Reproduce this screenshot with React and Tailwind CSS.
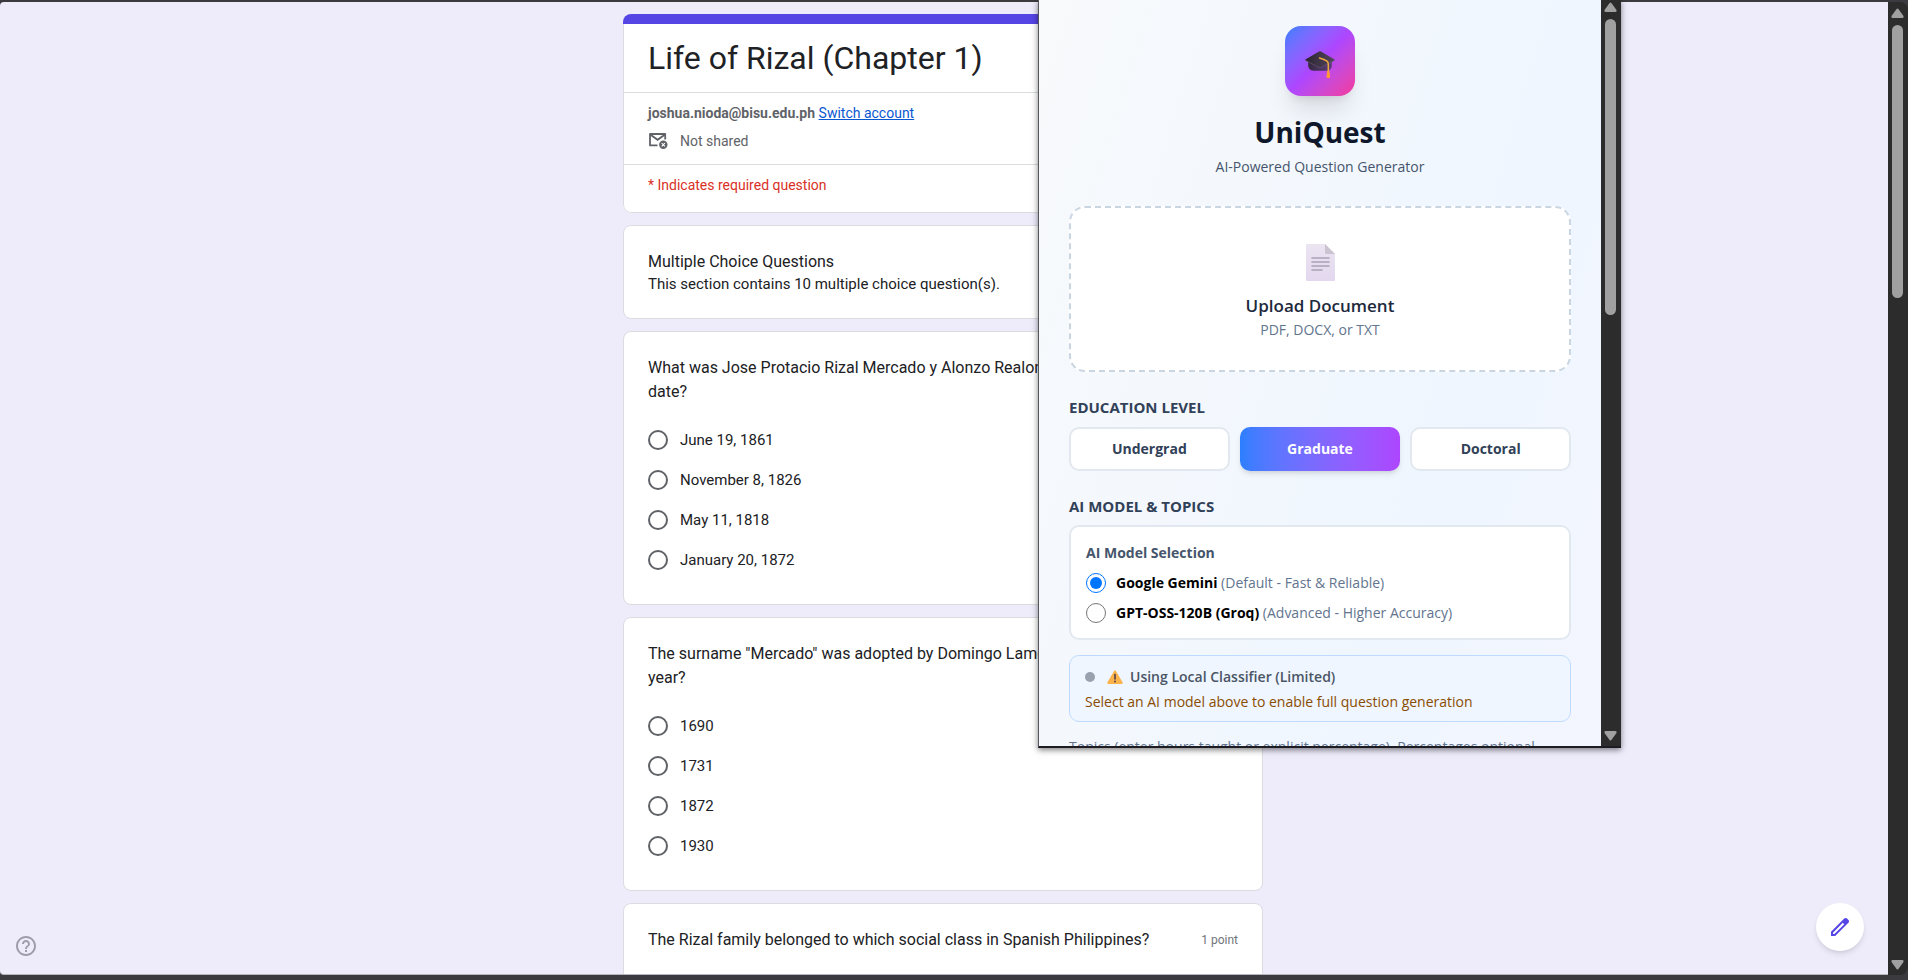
import { useState } from "react";

const QUESTIONS = [
  {
    id: "birth",
    text: "What was Jose Protacio Rizal Mercado y Alonzo Realonda's actual birth date?",
    options: ["June 19, 1861", "November 8, 1826", "May 11, 1818", "January 20, 1872"],
  },
  {
    id: "surname",
    text: 'The surname "Mercado" was adopted by Domingo Lameo during which year?',
    options: ["1690", "1731", "1872", "1930"],
  },
  {
    id: "class",
    text: "The Rizal family belonged to which social class in Spanish Philippines?",
    options: [],
  },
];

const LEVELS = ["Undergrad", "Graduate", "Doctoral"];

const MODELS = [
  { id: "gemini", name: "Google Gemini", note: "(Default - Fast & Reliable)" },
  { id: "groq", name: "GPT-OSS-120B (Groq)", note: "(Advanced - Higher Accuracy)" },
];

function Triangle({ down }) {
  return (
    <svg viewBox="0 0 13 10" className={down ? "h-[10px] w-[13px] rotate-180" : "h-[10px] w-[13px]"}>
      <path d="M5.6 1 Q6.5 0 7.4 1 L12.5 8 Q13 10 11.5 10 H1.5 Q0 10 .5 8 Z" fill="#a0a0a0" />
    </svg>
  );
}

function MailOffIcon() {
  return (
    <svg viewBox="0 0 20 18" className="h-[18px] w-5" fill="none">
      <path d="M17.2 7.5V2H2V13.4H9.5" stroke="#5f6368" strokeWidth="1.8" strokeLinejoin="round" />
      <path d="M2.2 2.6 9.6 7.8 17 2.6" stroke="#5f6368" strokeWidth="1.8" />
      <circle cx="15.3" cy="12.8" r="4.2" fill="#5f6368" />
      <path d="M13.7 11.2l3.2 3.2M16.9 11.2l-3.2 3.2" stroke="#fff" strokeWidth="1.1" />
    </svg>
  );
}

function CapIcon() {
  return (
    <svg viewBox="0 0 30 28" className="h-7 w-[30px]">
      <defs>
        <linearGradient id="capTop" x1="0" y1="0" x2="1" y2="0">
          <stop offset="0" stopColor="#2b2430" />
          <stop offset="1" stopColor="#54465f" />
        </linearGradient>
        <linearGradient id="capBase" x1="0" y1="0" x2="1" y2="0">
          <stop offset="0" stopColor="#35283f" />
          <stop offset="1" stopColor="#5b3e77" />
        </linearGradient>
      </defs>
      <path d="M3.2 9v6q.6 4.600 6 4.800h12q5-.2 5.600-4.800V9Z" fill="url(#capBase)" />
      <path d="M.4 8.400 14 .5q1-.5 2 0l13.600 7.900q.5.500-.2 1L16 16.400q-1 .5-2 0L.6 9.400q-.7-.5-.2-1Z" fill="url(#capTop)" />
      <path d="M.6 9.400 14 16.400q1 .5 2 0L29.400 9.400" fill="none" stroke="#6d5c7c" strokeWidth=".6" />
      <path d="M14.500 7q5 1.500 7.500 3.200 1.300 1 1.300 3v7" fill="none" stroke="#f0a93e" strokeWidth="1.500" strokeLinecap="round" />
      <path d="M22.200 20h2.200l.8 6q-1.900 2.400-3.800 0Z" fill="#ff9838" />
    </svg>
  );
}

function DocIcon() {
  return (
    <svg viewBox="0 0 29 37" className="h-[37px] w-[29px]">
      <defs>
        <linearGradient id="docFill" x1="0" y1="0" x2="0" y2="1">
          <stop offset="0" stopColor="#ebe4f1" />
          <stop offset="1" stopColor="#e3d8ef" />
        </linearGradient>
      </defs>
      <path d="M1 0H19L29 10V36q0 1-1 1H1q-1 0-1-1V1q0-1 1-1Z" fill="url(#docFill)" />
      <path d="M19 0 29 10H20q-1 0-1-1Z" fill="#cbc3d0" />
      <path d="M6 14h17M6 18h17M6 22h17M6 26h10" stroke="#aba1b5" strokeWidth="1.600" strokeLinecap="round" />
    </svg>
  );
}

function WarningIcon() {
  return (
    <svg viewBox="0 0 16 14" className="h-[14px] w-4">
      <path d="M7.200.8q.8-1 1.600 0L15.700 12.500q.2 1.200-.9 1.500H1.200Q.1 13.700.3 12.500Z" fill="#fbb34c" />
      <path d="M8 4.500v4.500" stroke="#46394e" strokeWidth="1.500" strokeLinecap="round" />
      <circle cx="8" cy="11.500" r=".9" fill="#46394e" />
    </svg>
  );
}

function Card({ children }) {
  return <section className="rounded-lg border border-[#dadce0] bg-white px-6 py-6">{children}</section>;
}

function Question({ question, answer, onAnswer }) {
  return (
    <Card>
      <fieldset>
        <div className="flex justify-between gap-4">
          <legend className="w-[528px] text-base leading-6">{question.text}</legend>
          <span className="shrink-0 text-xs leading-6 text-[#70757a]">1 point</span>
        </div>
        <div className="pt-4">
          {question.options.map((option) => (
            <label key={option} className="flex h-10 items-center gap-3 text-[15px]">
              <input
                type="radio"
                name={question.id}
                checked={answer === option}
                onChange={() => onAnswer(question.id, option)}
                className="size-5 appearance-none rounded-full border-2 border-[#5f6368] checked:border-[6px] checked:border-[#5645e5]"
              />
              {option}
            </label>
          ))}
        </div>
      </fieldset>
    </Card>
  );
}

function FormPage() {
  const [answers, setAnswers] = useState({});

  return (
    <main className="relative min-w-0 flex-1 overflow-hidden rounded-l-sm border-b border-[#b5b5bd] bg-[#eeecfb] pt-3 pr-0.5 font-[Roboto,sans-serif] text-[#202124]">
      <div className="mx-auto flex w-full max-w-[640px] flex-col gap-3">
        <header className="overflow-hidden rounded-lg bg-white text-sm">
          <div className="h-[10px] bg-[#5645e5]" />
          <div className="rounded-b-lg border border-t-0 border-[#dadce0]">
            <h1 className="border-b border-[#dadce0] px-6 py-[14px] text-[32px] leading-10">Life of Rizal (Chapter 1)</h1>
            <div className="border-b border-[#dadce0] px-6 pt-[10px] pb-[13px] text-[#5f6368]">
              <p className="leading-5">
                <b className="font-bold">joshua.nioda@bisu.edu.ph</b>{" "}
                <a href="#switch" className="text-[#0b57d0] underline">Switch account</a>
              </p>
              <p className="flex items-center gap-3 pt-2 leading-5">
                <MailOffIcon />
                Not shared
              </p>
            </div>
            <p className="px-6 pt-[10px] pb-[17px] leading-5 text-[#d93025]">* Indicates required question</p>
          </div>
        </header>

        <Card>
          <h2 className="text-base leading-6">Multiple Choice Questions</h2>
          <p className="text-[15px] leading-5">This section contains 10 multiple choice question(s).</p>
        </Card>

        {QUESTIONS.map((q) => (
          <Question
            key={q.id}
            question={q}
            answer={answers[q.id]}
            onAnswer={(id, value) => setAnswers({ ...answers, [id]: value })}
          />
        ))}
      </div>

      <button type="button" aria-label="Help" className="absolute bottom-[18px] left-4 size-5">
        <svg viewBox="2 2 20 20" className="size-5" fill="#9f9dab">
          <path d="M11 18h2v-2h-2v2zm1-16C6.480 2 2 6.480 2 12s4.480 10 10 10 10-4.480 10-10S17.520 2 12 2zm0 18c-4.410 0-8-3.590-8-8s3.590-8 8-8 8 3.590 8 8-3.590 8-8 8zm0-14c-2.210 0-4 1.790-4 4h2c0-1.100.9-2 2-2s2 .9 2 2c0 2-3 1.750-3 5h2c0-2.250 3-2.500 3-5 0-2.210-1.790-4-4-4z" />
        </svg>
      </button>
      <button
        type="button"
        aria-label="Edit this form"
        className="absolute right-6 bottom-[23px] flex size-12 items-center justify-center rounded-full bg-white shadow-md"
      >
        <svg viewBox="3 3 18 18" className="size-[18px]" fill="#5645e5">
          <path d="M20.410 4.940l-1.350-1.350c-.78-.78-2.050-.78-2.830 0L3 16.820V21h4.180L20.410 7.770c.79-.78.790-2.050 0-2.830zM6.410 19.060L5 19v-1.360l9.820-9.820 1.410 1.410-9.820 9.830z" />
        </svg>
      </button>
    </main>
  );
}

function Popup() {
  const [level, setLevel] = useState("Graduate");
  const [model, setModel] = useState("gemini");

  return (
    <aside className="absolute top-0 right-[287px] flex h-[748px] w-[583px] border-b-2 border-l border-b-[#1c1c22] border-l-[#55555c] font-['Open_Sans','Noto_Sans',sans-serif] shadow-[0_2px_6px_rgba(0,0,0,0.5)]">
      <div className="min-w-0 flex-1 overflow-hidden">
        <div className="min-h-[1800px] bg-linear-to-br from-slate-50 via-blue-50 to-purple-50 px-[30px] pt-[26px] text-sm">
          <div className="flex flex-col items-center">
            <div className="flex size-[70px] items-center justify-center rounded-2xl bg-linear-to-br from-[#2b7fff] via-[#ad46ff] to-[#f6339a] pt-[7px] shadow-xl">
              <CapIcon />
            </div>
            <h1 className="pt-4 text-[28px] leading-10 font-bold text-slate-900">UniQuest</h1>
            <p className="pt-[5px] leading-5 text-slate-600">AI-Powered Question Generator</p>
          </div>

          <button
            type="button"
            className="mt-[29px] flex h-[166px] w-full flex-col items-center rounded-2xl border-2 border-dashed border-slate-300 bg-white pt-9"
          >
            <DocIcon />
            <span className="pt-[13px] text-[17px] leading-6 font-semibold text-slate-800">Upload Document</span>
            <span className="pt-0.5 leading-5 text-slate-500">PDF, DOCX, or TXT</span>
          </button>

          <h2 className="pt-[25px] text-[15px] leading-5 font-bold text-slate-700">EDUCATION LEVEL</h2>
          <div className="grid grid-cols-3 gap-[10px] pt-[10px]">
            {LEVELS.map((name) => (
              <button
                key={name}
                type="button"
                onClick={() => setLevel(name)}
                className={
                  level === name
                    ? "h-11 rounded-[10px] bg-linear-to-r from-[#2b7fff] to-[#ad46ff] font-bold text-white shadow-md"
                    : "h-11 rounded-[10px] border-2 border-slate-200 bg-white font-bold text-slate-700"
                }
              >
                {name}
              </button>
            ))}
          </div>

          <h2 className="pt-[25px] text-[15px] leading-5 font-bold text-slate-700">AI MODEL &amp; TOPICS</h2>
          <fieldset className="mt-[9px] rounded-[10px] border-2 border-slate-200 bg-white px-[15px] pt-4 pb-[10px]">
            <p className="leading-5 font-bold text-slate-600">AI Model Selection</p>
            <div className="pt-[5px]">
              {MODELS.map((m) => (
                <label key={m.id} className="flex h-[30px] items-center gap-[10px]">
                  <input
                    type="radio"
                    name="model"
                    checked={model === m.id}
                    onChange={() => setModel(m.id)}
                    className="size-5 accent-[#0075ff]"
                  />
                  <span className="text-slate-500">
                    <strong className="font-bold text-black">{m.name}</strong> {m.note}
                  </span>
                </label>
              ))}
            </div>
          </fieldset>

          <div className="mt-[15px] rounded-[10px] border border-blue-200 bg-blue-50 px-[15px] pt-[11px] pb-[9px]">
            <p className="flex items-center leading-5 font-semibold text-gray-600">
              <span className="mr-3 size-[10px] rounded-full bg-gray-400" />
              <WarningIcon />
              <span className="pl-[7px]">Using Local Classifier (Limited)</span>
            </p>
            <p className="pt-[5px] leading-5 text-yellow-800">Select an AI model above to enable full question generation</p>
          </div>

          <p className="pt-[15px] leading-5 whitespace-nowrap text-slate-500">
            Topics (enter hours taught or explicit percentage). Percentages optional.
          </p>
        </div>
      </div>
      <div className="flex w-5 flex-col items-center bg-[#2c2c2c] pt-[2px] pr-0.5 pb-[5px]">
        <Triangle />
        <div className="mt-[7px] h-[296px] w-[11px] rounded-full bg-[#a0a0a0]" />
        <div className="flex-1" />
        <Triangle down />
      </div>
    </aside>
  );
}

export default function App() {
  return (
    <div className="relative flex h-screen overflow-hidden bg-[#3b3b3f] pt-0.5 pb-[5px]">
      <FormPage />
      <div className="flex w-5 flex-col items-center rounded-r-lg bg-[#2c2c2c] pt-[6px] pr-0.5 pb-[5px]">
        <Triangle />
        <div className="mt-[7px] h-[273px] w-[11px] rounded-full bg-[#a0a0a0]" />
        <div className="flex-1" />
        <Triangle down />
      </div>
      <Popup />
    </div>
  );
}
